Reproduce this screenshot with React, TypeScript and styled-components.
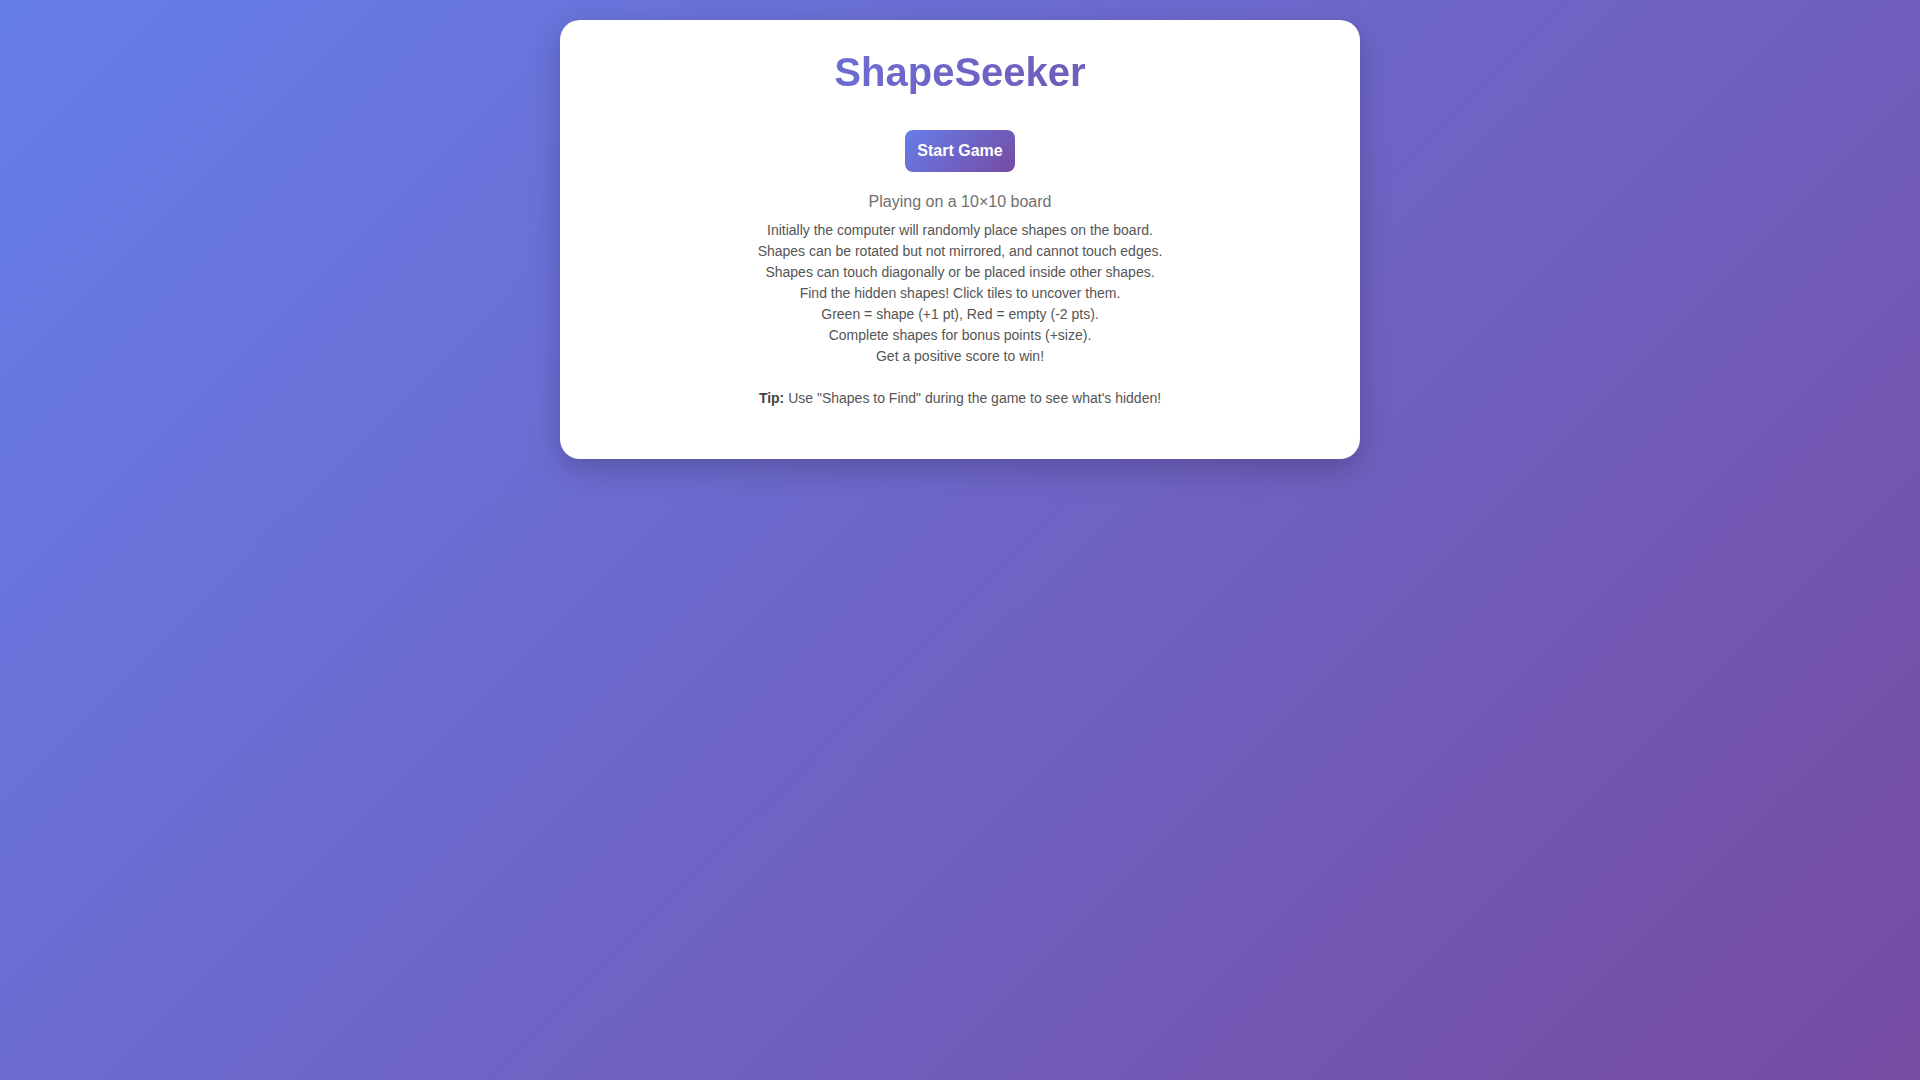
import React from "react";
import styled, { createGlobalStyle } from "styled-components";

const GlobalStyle = createGlobalStyle`
    html, body {
        margin: 0;
        padding: 0;
    }

    body {
        min-height: 100vh;
        font-family: "Liberation Sans", Arial, sans-serif;
        background: linear-gradient(135deg, #667eea 0%, #764ba2 100%);
    }
`

const Page = styled.div`
    display: flex;
    justify-content: center;
    padding: 20px;
    min-height: 100vh;
    box-sizing: border-box;
`

const Card = styled.div`
    width: 800px;
    height: fit-content;
    box-sizing: border-box;
    padding: 30px 30px 50px;
    background: #fff;
    border-radius: 20px;
    box-shadow: 0 10px 30px rgba(0, 0, 0, 0.2);
    text-align: center;
`

const Title = styled.h1`
    margin: 0 0 35px;
    font-size: 40px;
    font-weight: bold;
    background: linear-gradient(135deg, #667eea 0%, #764ba2 100%);
    -webkit-background-clip: text;
    background-clip: text;
    color: transparent;
`

const StartButton = styled.button`
    padding: 12px;
    border: none;
    border-radius: 8px;
    background: linear-gradient(135deg, #667eea 0%, #764ba2 100%);
    color: #fff;
    font-family: inherit;
    font-size: 16px;
    font-weight: bold;
    cursor: pointer;
`

const BoardInfo = styled.p`
    margin: 21px 0 9px;
    font-size: 16px;
    color: #707070;
`

const Rules = styled.div`
    font-size: 14px;
    line-height: 21px;
    color: #555;

    p {
        margin: 0;
    }
`

const Tip = styled.p`
    margin: 21px 0 0;
    font-size: 14px;
    line-height: 21px;
    color: #555;

    strong {
        color: #444;
    }
`

const rules = [
    "Initially the computer will randomly place shapes on the board.",
    "Shapes can be rotated but not mirrored, and cannot touch edges.",
    "Shapes can touch diagonally or be placed inside other shapes.",
    "Find the hidden shapes! Click tiles to uncover them.",
    "Green = shape (+1 pt), Red = empty (-2 pts).",
    "Complete shapes for bonus points (+size).",
    "Get a positive score to win!",
];

const App = () => {
    return <>
        <GlobalStyle />
        <Page>
            <Card>
                <Title>ShapeSeeker</Title>
                <StartButton>Start Game</StartButton>
                <BoardInfo>Playing on a 10×10 board</BoardInfo>
                <Rules>
                    {rules.map((rule, index) => <p key={index}>{rule}</p>)}
                </Rules>
                <Tip><strong>Tip:</strong> Use "Shapes to Find" during the game to see what's hidden!</Tip>
            </Card>
        </Page>
    </>
}

export default App;
